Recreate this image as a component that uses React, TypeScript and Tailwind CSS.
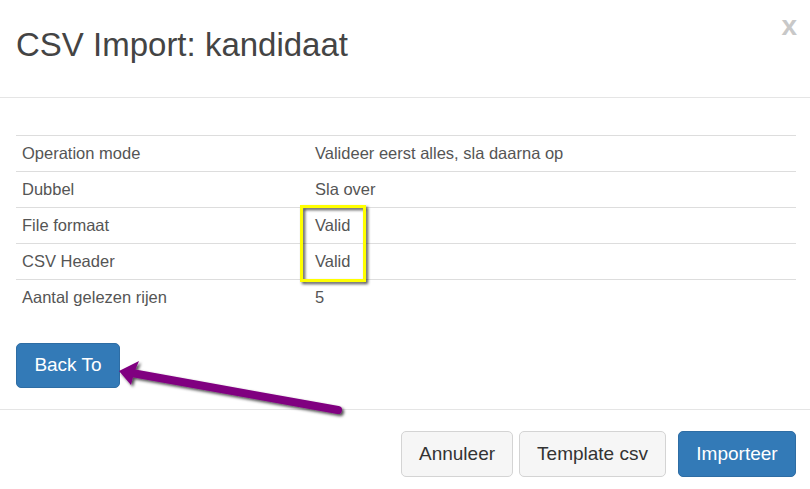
import type { ReactNode } from 'react';

const ROWS: { label: string; value: string }[] = [
  { label: 'Operation mode', value: 'Valideer eerst alles, sla daarna op' },
  { label: 'Dubbel', value: 'Sla over' },
  { label: 'File formaat', value: 'Valid' },
  { label: 'CSV Header', value: 'Valid' },
  { label: 'Aantal gelezen rijen', value: '5' },
];

const FONT = "font-['Liberation_Sans',Arial,sans-serif]";

function DefaultButton({ children, className }: { children: ReactNode; className: string }) {
  return (
    <button
      className={`h-[46px] rounded-[5px] border border-[#d4d4d4] bg-[#f6f6f6] text-[19px] text-[#333] ${className}`}
    >
      {children}
    </button>
  );
}

export default function App() {
  return (
    <div className={`relative h-[489px] w-[810px] overflow-hidden bg-white ${FONT}`}>
      <div className="relative h-[98px] border-b border-[#e5e5e5] px-[16px]">
        <h4 className="pt-[27px] text-[33px] leading-[1.1] text-[#444]">CSV Import: kandidaat</h4>
        <span className="absolute right-[13px] top-[12px] text-[28px] leading-[28px] font-bold text-[#c8c8c8]">
          x
        </span>
      </div>

      <div className="px-[16px] pb-[21px] pt-[37px]">
        <div className="w-[780px]">
          {ROWS.map((row) => (
            <div
              key={row.label}
              className="flex h-[36px] items-center border-t border-[#dddddd] text-[16.5px] text-[#555]"
            >
              <span className="w-[293px] shrink-0 pl-[6px]">{row.label}</span>
              <span className="pl-[6px]">{row.value}</span>
            </div>
          ))}
        </div>
        <button className="mt-[28px] h-[45px] w-[104px] rounded-[5px] border border-[#2e6da4] bg-[#337ab7] text-[19px] text-white">
          Back To
        </button>
      </div>

      <div className="flex justify-end border-t border-[#e5e5e5] px-[14px] pt-[21px]">
        <DefaultButton className="w-[112px]">Annuleer</DefaultButton>
        <DefaultButton className="ml-[6px] w-[147px]">Template csv</DefaultButton>
        <button className="ml-[12px] h-[46px] w-[118px] rounded-[5px] border border-[#2e6da4] bg-[#337ab7] text-[19px] text-white">
          Importeer
        </button>
      </div>

      {/* annotations drawn over the screenshot */}
      <svg className="pointer-events-none absolute left-0 top-0" width="810" height="489">
        <defs>
          <filter id="shadow" x="-20%" y="-20%" width="140%" height="140%">
            <feDropShadow dx="2" dy="2" stdDeviation="1.5" floodColor="#000" floodOpacity="0.7" />
          </filter>
        </defs>
        <rect x="301.5" y="206.5" width="63" height="74" fill="none" stroke="#ffff00" strokeWidth="3" filter="url(#shadow)" />
        <g filter="url(#shadow)">
          <line x1="338" y1="410" x2="132" y2="373" stroke="#800080" strokeWidth="8" strokeLinecap="round" />
          <polygon points="119,371 139,361 134,373 131,385" fill="#800080" />
        </g>
      </svg>
    </div>
  );
}
